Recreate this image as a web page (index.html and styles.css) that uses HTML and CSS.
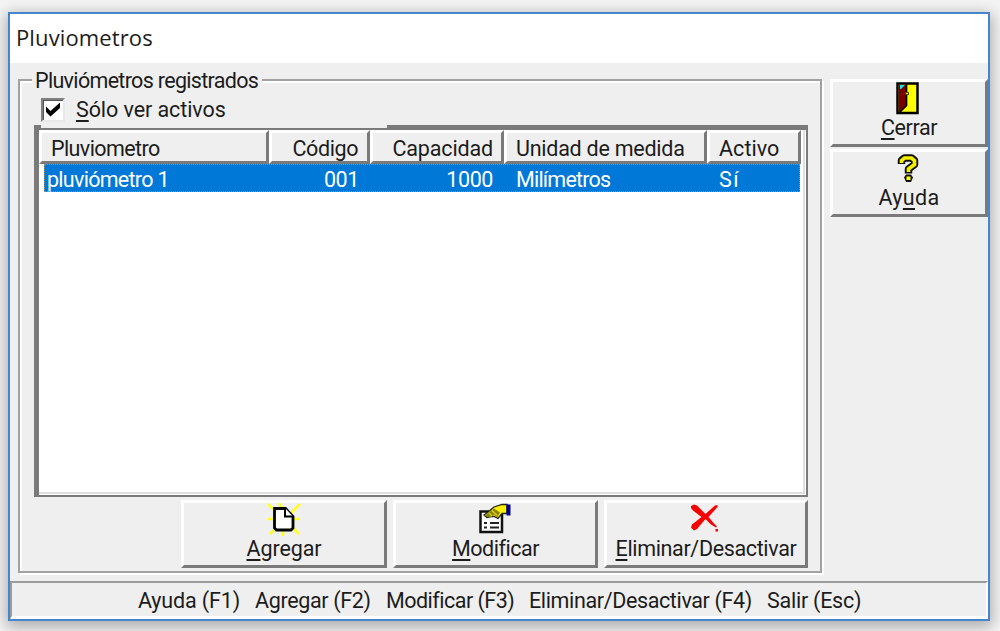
FILE: index.html
```html
<!DOCTYPE html>
<html lang="es">
<head>
<meta charset="utf-8">
<title>Pluviometros</title>
<link rel="stylesheet" href="styles.css">
</head>
<body>
<main class="window">
  <header class="titlebar"><span>Pluviometros</span></header>
  <div class="content">
    <section class="group">
      <div class="legend"><span class="t-legend">Pluviómetros registrados</span></div>
      <label class="check">
        <span class="box"><svg width="20" height="20" viewBox="0 0 20 20"><path d="M3 6.500v5.500l4.500 4.500L17 8V2.500L7.500 11z" fill="#000"/></svg></span>
        <span class="t-check"><u>S</u>ólo ver activos</span>
      </label>
      <div class="list">
        <div class="head cols">
          <div class="th"><span class="t-pl">Pluviometro</span></div>
          <div class="th right"><span class="t-co">Código</span></div>
          <div class="th right"><span class="t-ca">Capacidad</span></div>
          <div class="th"><span class="t-un">Unidad de medida</span></div>
          <div class="th"><span class="t-ac">Activo</span></div>
        </div>
        <div class="row cols">
          <div class="td first"><span class="t-p1">pluviómetro 1</span></div>
          <div class="td right"><span class="t-num">001</span></div>
          <div class="td right"><span class="t-num">1000</span></div>
          <div class="td"><span class="t-mi">Milímetros</span></div>
          <div class="td"><span class="t-si">Sí</span></div>
        </div>
      </div>
      <div class="actions">
        <button class="btn">
          <svg width="33" height="33" viewBox="0 0 33 33"><path d="M0 1l7 7M11 0l3 5M32 1l-9 9M0 16h7M26 16h6M2 31l6-6M15 28v5M31 31l-6-6" stroke="#ffff20" stroke-width="2.600" fill="none"/><path d="M6.500 5.500h11l7.500 8v11.500l-2 2H8.500l-2-2z" fill="#fff" stroke="#000" stroke-width="2.800"/><path d="M17 5v8.500h8" fill="#fff" stroke="#000" stroke-width="2"/></svg>
          <span class="t-ag"><u>A</u>gregar</span>
        </button>
        <button class="btn">
          <svg width="33" height="33" viewBox="0 0 33 33"><path d="M1.500 8.500h21.500v20.500h-21.500z" fill="#fff" stroke="#111" stroke-width="2.500"/><path d="M5 20h3M11 20h9M5 24.500h3M11 24.500h9" stroke="#222" stroke-width="2"/><path d="M5 12l4-3 6-5 8-2.500h5v9h-5l-4 5-4-2-3 0-4 1z" fill="#fff000" stroke="#222" stroke-width="1.300"/><path d="M6 12.500l5-4 4-3 6 4-3 5-3-3-3 3-3-1z" fill="#8c8400"/><path d="M10 10l3 3M13 7.500l5 5" stroke="#ded400" stroke-width="1.300"/><path d="M27.500 1.500h4v11h-4z" fill="#000088"/></svg>
          <span class="t-mo"><u>M</u>odificar</span>
        </button>
        <button class="btn">
          <svg width="33" height="33" viewBox="0 0 33 33"><path d="M1 3l3-1.500 3 1 8.500 8.500L25 2.500l2.500-.5v2L18.500 14l5.500 6.500 3 3-1 1-5-3-5.500-5.500-8.500 10-3 1.500-3-3 1-3L11.500 14 3 7.500 1 5zM25.500 26h2.500v2.500h-2.500z" fill="#f60000"/></svg>
          <span class="t-el"><u>E</u>liminar/Desactivar</span>
        </button>
      </div>
    </section>
    <aside class="side">
      <button class="btn">
        <svg width="33" height="33" viewBox="0 0 33 33"><path d="M4.500 1.500h20v29.500h-20z" fill="#ffff00" stroke="#000" stroke-width="2.500"/><path d="M5.700 2.700h8v21l-6 6h-2z" fill="#780000"/><path d="M13.500 2v21.500l-7 7" fill="none" stroke="#000" stroke-width="1.700"/><path d="M7 3h5l-4 4H7z" fill="#28e0e8"/><path d="M12 11.500h4" stroke="#554800" stroke-width="3"/><path d="M13 11.500h2" stroke="#fff000" stroke-width="1.200"/></svg>
        <span class="t-ce"><u>C</u>errar</span>
      </button>
      <button class="btn">
        <svg width="33" height="33" viewBox="0 0 33 33"><path d="M8.500 12V8.500L11.500 6h7L21.500 8.500v4L15.500 17v4.500" fill="none" stroke="#111" stroke-width="7.500" stroke-linejoin="round"/><path d="M13 22.500h5l2 3-2 4.500h-5l-2-4.500z" fill="#111"/><path d="M8.500 11V8.500L11.500 6h7L21.500 8.500v4L15.500 17v3" fill="none" stroke="#f4ee00" stroke-width="3.700"/><path d="M13.500 24.500h4v3.500h-4z" fill="#ffff00"/></svg>
        <span class="t-ay">Ay<u>u</u>da</span>
      </button>
    </aside>
  </div>
  <footer class="status">
    <span class="s1">Ayuda (F1)</span>
    <span class="s2">Agregar (F2)</span>
    <span class="s3">Modificar (F3)</span>
    <span class="s4">Eliminar/Desactivar (F4)</span>
    <span class="s5">Salir (Esc)</span>
  </footer>
</main>
</body>
</html>
```
FILE: styles.css
```css
* { box-sizing: border-box; }
body {
  margin: 0;
  height: 631px;
  overflow: hidden;
  padding: 12px 10px 0 8px;
  background: #f4f4f4;
  font: 21.5px/24px Roboto, "Liberation Sans", sans-serif;
  color: #1c1c1c;
}
span { white-space: nowrap; }
u { text-decoration-thickness: 2px; text-underline-offset: 3px; text-decoration-skip-ink: none; }
.window {
  height: 609px;
  display: flex;
  flex-direction: column;
  background: #efefef;
  border: 2px solid #4485cc;
  box-shadow: 0 4px 14px 2px rgba(0, 0, 0, .3);
}
.titlebar {
  flex: 0 0 49px;
  padding: 8px 0 0 6px;
  background: #fff;
  font: 22px/30px "Open Sans", "Noto Sans", sans-serif;
  letter-spacing: .12px;
}
.content { flex: 0 0 518px; display: flex; padding: 16px 0 0 8px; }
.group {
  width: 804px;
  height: 494px;
  border: 2px solid #a2a2a2;
  box-shadow: 2px 2px 0 #fff, inset 2px 2px 0 #fff;
}
.legend {
  width: 230px;
  height: 24px;
  margin: -12px 0 0 12px;
  padding-left: 3px;
  background: #efefef;
}
.check { display: flex; gap: 11px; margin: 5px 0 0 21px; height: 24px; }
.box {
  width: 24px;
  height: 24px;
  background: #fff;
  border: 2px solid #808080;
  border-right-color: #e8e8e8;
  border-bottom-color: #e8e8e8;
  box-shadow: inset 1px 1px 0 #555;
}
.box svg { display: block; }
.list {
  position: relative;
  width: 774px;
  height: 372px;
  margin: 3px 0 0 14px;
  background: #fff;
  border: solid #7a7a7a;
  border-width: 5px 2px 2px 5px;
  box-shadow: inset -1px -1px 0 #fff, inset -3px -3px 0 #dfdfdf;
}
.list::before {
  content: "";
  position: absolute;
  left: 2px;
  top: -5px;
  width: 346px;
  height: 3px;
  background: #efefef;
}
.cols { display: grid; grid-template-columns: 230px 101px 134px 203px 94px; }
.head { width: 762px; height: 34px; }
.th {
  height: 34px;
  padding: 4px 9px 0 9px;
  background: #efefef;
  border: solid #7a7a7a;
  border-width: 3px;
  border-top-color: #fff;
  border-left-color: #fff;
}
.right { text-align: right; }
.row {
  width: 756px;
  height: 28px;
  margin-left: 5px;
  grid-template-columns: 225px 101px 134px 203px 93px;
  color: #fff;
  background: #0078d7;
  outline: 1px dotted #b58a4c;
  outline-offset: -1px;
}
.td { padding: 4px 11px 0 12px; }
.td.first { padding-left: 3px; }
.actions {
  display: grid;
  grid-template-columns: 206px 205px 204px;
  column-gap: 6px;
  margin: 3px 0 0 161px;
}
.btn {
  height: 68px;
  padding: 0;
  display: flex;
  flex-direction: column;
  align-items: center;
  justify-content: flex-start;
  gap: 1px;
  font: inherit;
  color: inherit;
  background: #efefef;
  border: 3px solid #7a7a7a;
  border-top-color: #fff;
  border-left-color: #fff;
}
.btn svg { display: block; flex: none; }
.side { width: 158px; margin-left: 8px; display: flex; flex-direction: column; gap: 2px; }
.status {
  flex: 1;
  display: flex;
  padding: 6px 0 0 126px;
  border: solid #fff;
  border-width: 2px 2px 3px 2px;
  border-top-color: #9b9b9b;
  border-left-color: #9b9b9b;
}
/* Letter fitting of the bitmap-style caption face */
.t-legend { letter-spacing: -.68px; }
.t-check { letter-spacing: -.08px; }
.t-pl { letter-spacing: -.6px; }
.t-co { letter-spacing: -.4px; }
.t-ca { letter-spacing: -.15px; margin-right: -1px; }
.t-un { letter-spacing: -.25px; }
.t-ac { letter-spacing: .05px; }
.t-p1 { letter-spacing: -.72px; }
.t-num { letter-spacing: -.4px; }
.t-mi { letter-spacing: -.8px; }
.t-si { letter-spacing: 1.5px; }
.t-ce { letter-spacing: -.4px; }
.t-ay { letter-spacing: .3px; }
.t-ag { letter-spacing: -.1px; }
.t-mo { letter-spacing: -.5px; }
.t-el { letter-spacing: -.35px; }
.s1 { width: 117px; letter-spacing: -.15px; }
.s2 { width: 131px; letter-spacing: -.35px; }
.s3 { width: 143px; letter-spacing: -.52px; }
.s4 { width: 238px; letter-spacing: -.37px; }
.s5 { letter-spacing: -.25px; }
```
